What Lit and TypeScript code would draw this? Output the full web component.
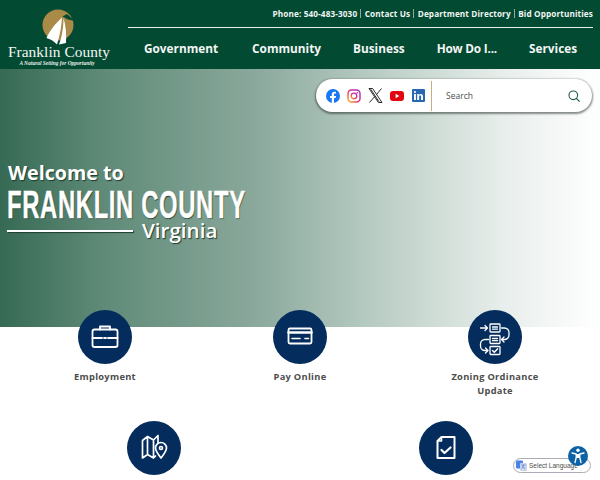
import { LitElement, html, css, svg } from "lit";
import { customElement } from "lit/decorators.js";

const icons = {
  brief: svg`<rect x="14.500" y="19.500" width="25" height="17.500" rx="2"/><path d="M22 19.500V16.500h10v3M14.500 28h9.500M30 28h9.500M26 28h2" />`,
  card: svg`<rect x="15.500" y="18.500" width="23" height="15" rx="1.500"/><path d="M15.500 22.500h23" stroke-width="2.500"/><path d="M19 28.500h8M32 28.500h3.500" stroke-width="1.600"/>`,
  flow: svg`<g stroke-width="1.300"><path d="M12.500 18h7M17 15.500l2.500 2.500-2.500 2.500"/><rect x="22" y="14" width="10" height="8" rx=".8"/><path d="M24.500 17h5M24.500 19.200h5"/><path d="M33.500 18h3a4.500 4.500 0 0 1 4.500 4.500v2.500a4.500 4.500 0 0 1-4.500 4.500h-2.500M36 27l-2.500 2.500 2.500 2.500"/><rect x="22" y="25.500" width="10" height="8" rx=".8"/><path d="M24.500 28.500h5M24.500 30.700h5"/><path d="M20.500 29.500h-3.500a4.500 4.500 0 0 0-4.500 4.500v2a4.500 4.500 0 0 0 4.500 4.500h2.500M17.500 38l2.500 2.500-2.500 2.500"/><rect x="22" y="36.500" width="10" height="8" rx=".8"/><path d="M24.500 40.500l1.800 1.800 3.200-3.400" stroke-width="1.500"/></g>`,
  map: svg`<g stroke-width="1.700"><path d="M15.500 19.500l5-4 6 3.500 4.500-4.500v7.500M15.500 19.500V37l5-3.500 6 3.500 2-2M20.500 15.500v18M26.500 19v18"/><path d="M34 37c-3.500-4.500-5.500-7-5.500-10a5.500 5.500 0 0 1 11 0c0 3-2 5.500-5.500 10z"/><circle cx="34" cy="27" r="1.500"/></g>`,
  check: svg`<g stroke-width="2"><path d="M22.500 16H35.500v21h-17V20z"/><path d="M22.500 16.500v3.500h-3.500" stroke-width="1.600"/><path d="M22.500 29l3 3 6-5.500" stroke-width="2.200"/></g>`,
};

@customElement("app-root")
export class AppRoot extends LitElement {
  static styles = css`
    :host { display: block; width: 600px; height: 480px; overflow: hidden; position: relative; background: #fff; font-family: "Open Sans", "Noto Sans", sans-serif; }
    header { height: 69px; background: #034a33; display: flex; box-sizing: border-box; padding-right: 7px; color: #fff; }
    .logo { width: 128px; flex: none; display: flex; flex-direction: column; align-items: center; padding: 9px 10px 0 0; box-sizing: border-box; }
    .logo svg { display: block; width: 34px; height: 36px; margin-right: 3px; }
    .logo .name { font: 15.400px/16px "Liberation Serif", serif; white-space: nowrap; color: #f4f6f2; margin-top: -1px; letter-spacing: .05px; }
    .logo .tag { font: italic bold 5.400px/7px "Liberation Serif", serif; white-space: nowrap; color: #e8eee9; margin-right: 4px; }
    .right { flex: 1; display: flex; flex-direction: column; }
    .top { box-sizing: border-box; border-bottom: 1px solid #e6efe9; height: 28px; display: flex; justify-content: flex-end; align-items: center; font-size: 8.200px; font-weight: 700; color: #f1f5f2; white-space: nowrap; letter-spacing: .12px; }
    .top span + span { border-left: 1px solid #8fa99d; margin-left: 3px; padding-left: 3.500px; line-height: 9px; }
    nav { flex: 1; display: flex; align-items: center; gap: 32px; padding: 0 0 1px 16px; font-size: 11.800px; font-weight: 700; color: #f3f6f4; white-space: nowrap; }
    nav .first { margin-right: 2px; }
    nav .tight { letter-spacing: -.2px; }
    .hero { height: 258px; position: relative; background: linear-gradient(90deg, #366a54 0%, #5f8a78 17%, #8ba99c 43%, #bccfc7 64%, #e8eeeb 84%, #ffffff 100%); color: #fff; display: flex; flex-direction: column; padding: 92px 0 0 8px; box-sizing: border-box; text-shadow: 1px 1px 1px #1d3d2f; }
    .welcome { font-size: 19.700px; line-height: 24px; font-weight: 700; }
    .county { margin: 6px 0 0 -1px; width: 238px; height: 28px; white-space: nowrap; display: flex; }
    .county span { display: block; font: bold 38.500px/28px "Liberation Sans", sans-serif; letter-spacing: 1px; -webkit-text-stroke: .4px #fff; transform: scaleX(.62); transform-origin: 0 50%; }
    .sub { display: flex; align-items: center; gap: 9px; margin: 0 0 0 -1px; font-size: 20.600px; line-height: 22px; font-weight: 600; }
    .sub i { display: block; width: 126px; height: 2px; background: #fff; box-shadow: 1px 1px 1px #1d3d2f; margin-top: 1px; }
    .bar { position: absolute; left: 316px; top: 10px; width: 276px; height: 33px; box-sizing: border-box; background: #fff; border-radius: 17px; box-shadow: 0 1px 2px 1px rgba(40,50,45,.55); display: flex; align-items: center; padding-left: 10px; text-shadow: none; }
    .bar .soc { display: flex; align-items: center; gap: 7px; flex: none; }
    .bar svg { display: block; flex: none; }
    .bar .soc .li { margin-left: 1px; }
    .bar .div { width: 1px; height: 30px; background: #c4ae84; margin: 0 14px 0 6px; flex: none; }
    .bar .q { flex: 1; font-size: 8.500px; color: #4a4f4d; }
    .bar .search { margin-right: 12px; }
    .links { margin: -17px 7.500px 0; display: grid; grid-template-columns: repeat(6, 1fr); position: relative; }
    .item { grid-column: span 2; display: flex; flex-direction: column; align-items: center; text-align: center; height: 111px; }
    .item.wide { grid-column: span 3; }
    .circle { width: 54px; height: 54px; border-radius: 50%; background: #042c5c; flex: none; }
    .circle svg { display: block; fill: none; stroke: #fff; stroke-width: 1.800; stroke-linejoin: round; stroke-linecap: round; }
    .label { margin-top: 6px; font-size: 9.300px; line-height: 14px; font-weight: 700; color: #4d4d4d; width: 100px; letter-spacing: .3px; }
    .translate { position: absolute; left: 513px; top: 458px; width: 78px; height: 15px; box-sizing: border-box; border: 1px solid #a9adb6; border-radius: 8px; background: #fff; display: flex; align-items: center; padding-left: 2px; gap: 2px; font: 6.500px "Liberation Sans", sans-serif; color: #4d4d4d; white-space: nowrap; }
    .access { position: absolute; left: 568px; top: 446px; width: 20px; height: 20px; display: block; }
  `;

  private quick(label: string, icon: unknown, wide = false) {
    return html`<div class="item ${wide ? "wide" : ""}">
      <div class="circle"><svg width="54" height="54" viewBox="0 0 54 54">${icon}</svg></div>
      <div class="label">${label}</div>
    </div>`;
  }

  render() {
    return html`
      <header>
        <div class="logo">
          <svg viewBox="0 0 34 36">
            <circle cx="17" cy="16" r="15.500" fill="#a98b47"/>
            <path d="M21.500 7.500L26 5l8 7-7-1.500z" fill="#034a33"/>
            <path d="M21 8.500C15 14 9 21 5.500 29 9 30 13 32 16 35.500 19 26 20.500 17 21 8.500z" fill="#fff"/>
            <path d="M22.500 9c0 9-1.500 19-4.500 26.500l7-1.500c.5-8 0-17-2.500-25z" fill="#fff"/>
          </svg>
          <div class="name">Franklin County</div>
          <div class="tag">A Natural Setting for Opportunity</div>
        </div>
        <div class="right">
          <div class="top"><span>Phone: 540-483-3030</span><span>Contact Us</span><span>Department Directory</span><span>Bid Opportunities</span></div>
          <nav><span class="first">Government</span><span>Community</span><span>Business</span><span class="tight">How Do I...</span><span>Services</span></nav>
        </div>
      </header>
      <section class="hero">
        <div class="welcome">Welcome to</div>
        <div class="county"><span>FRANKLIN COUNTY</span></div>
        <div class="sub"><i></i><span>Virginia</span></div>
        <div class="bar">
          <div class="soc">
            <svg width="14" height="14" viewBox="0 0 14 14"><circle cx="7" cy="7" r="7" fill="#1877f2"/><path d="M9.700 9l.3-2H8V5.700c0-.6.3-1.100 1.100-1.100h.9V2.900s-.8-.1-1.600-.1C6.800 2.800 5.800 3.800 5.800 5.500V7H4v2h1.800v5h2.200V9z" fill="#fff"/></svg>
            <svg width="14" height="14" viewBox="0 0 14 14"><defs><linearGradient id="ig" x1="0" y1="1" x2="1" y2="0"><stop offset="0" stop-color="#fdb52a"/><stop offset=".45" stop-color="#e8306f"/><stop offset="1" stop-color="#a02fd0"/></linearGradient></defs><rect x="1" y="1" width="12" height="12" rx="3.500" fill="none" stroke="url(#ig)" stroke-width="1.500"/><circle cx="7" cy="7" r="2.800" fill="none" stroke="url(#ig)" stroke-width="1.300"/><circle cx="10.300" cy="3.700" r=".8" fill="#c72f9c"/></svg>
            <svg width="15" height="15" viewBox="0 0 14 15"><path d="M.5.500h3.600l9.400 14H9.900zM13 .5L8 6.500M6 8.800L1 14.500M2.300 1.300l8.200 12.400" fill="none" stroke="#2b2b2b" stroke-width="1"/></svg>
            <svg width="14" height="10" viewBox="0 0 14 10"><rect width="14" height="10" rx="3" fill="#e1060f"/><path d="M5.600 2.800L9.400 5 5.600 7.200z" fill="#fff"/></svg>
            <svg class="li" width="13" height="13" viewBox="0 0 13 13"><rect width="13" height="13" rx="1" fill="#2867b2"/><rect x="2" y="5" width="1.900" height="6" fill="#fff"/><circle cx="2.950" cy="3" r="1.100" fill="#fff"/><path d="M5.200 5H7v.9c.4-.6 1-1 1.900-1 1.500 0 2.100.9 2.100 2.500V11H9.100V7.800c0-.8-.3-1.300-1-1.300s-1 .5-1 1.300V11H5.200z" fill="#fff"/></svg>
          </div>
          <div class="div"></div>
          <div class="q">Search</div>
          <svg class="search" width="12" height="12" viewBox="0 0 12 12" fill="none" stroke="#1e5a48" stroke-width="1.100" stroke-linecap="round"><circle cx="5.300" cy="5.300" r="4.300"/><path d="M8.500 8.500L11.300 11.300"/></svg>
        </div>
      </section>
      <div class="links">
        ${this.quick("Employment", icons.brief)}
        ${this.quick("Pay Online", icons.card)}
        ${this.quick("Zoning Ordinance Update", icons.flow)}
        ${this.quick("", icons.map, true)}
        ${this.quick("", icons.check, true)}
      </div>
      <div class="translate">
        <svg width="11" height="11" viewBox="0 0 11 11"><rect x="0" y="0.500" width="7" height="8" rx="1" fill="#4a82e8"/><rect x="4" y="3" width="7" height="8" rx="1" fill="#c9d5ee"/><path d="M5.500 5h4M7.500 5c-.2 1.700-1 2.800-2 3.500M6.500 6.500c.6 1 1.400 1.600 2.500 2" fill="none" stroke="#4a6fb5" stroke-width=".6"/></svg>
        <span>Select Language</span>
      </div>
      <svg class="access" viewBox="0 0 20 20"><circle cx="10" cy="10" r="10" fill="#0c62a5"/><circle cx="10" cy="4.200" r="1.700" fill="#fff"/><path d="M4 7l4.200 1v3.500L7 16.500M16 7l-4.200 1v3.500L13 16.500" fill="none" stroke="#fff" stroke-width="1.300" stroke-linecap="round" stroke-linejoin="round"/><path d="M8.200 8h3.600v4h-3.600z" fill="#fff"/></svg>
    `;
  }
}
